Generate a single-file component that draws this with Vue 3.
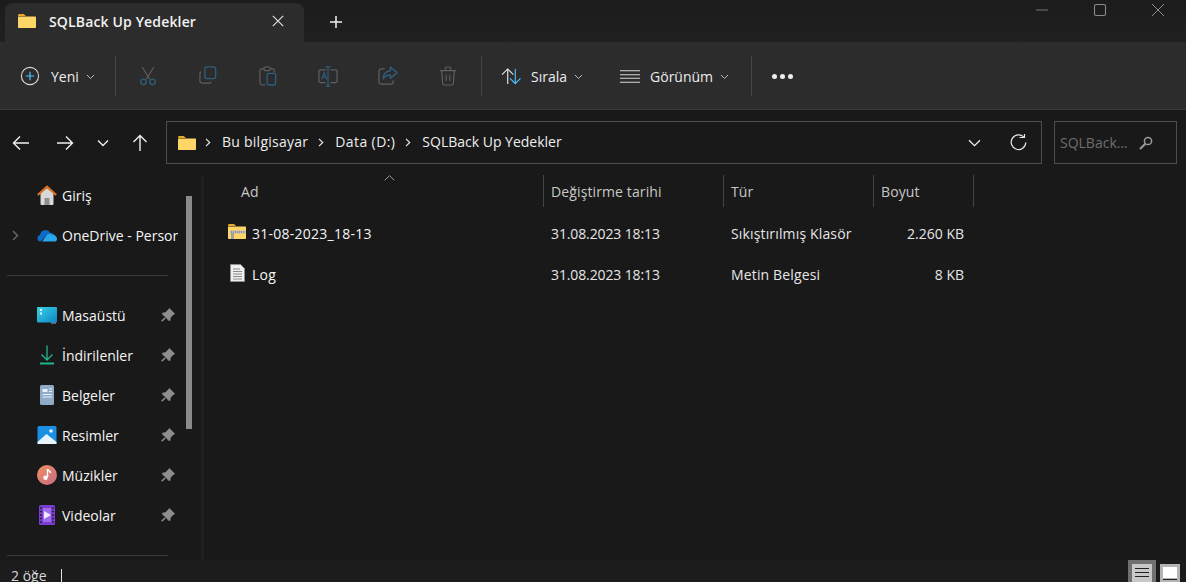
<script setup>
const navItems = [
  { key: 'desk', label: 'Masaüstü' },
  { key: 'down', label: 'İndirilenler' },
  { key: 'docs', label: 'Belgeler' },
  { key: 'pics', label: 'Resimler' },
  { key: 'music', label: 'Müzikler' },
  { key: 'video', label: 'Videolar' },
]
const columns = ['Ad', 'Değiştirme tarihi', 'Tür', 'Boyut']
const files = [
  { icon: 'zip', name: '31-08-2023_18-13', date: '31.08.2023 18:13', type: 'Sıkıştırılmış Klasör', size: '2.260 KB' },
  { icon: 'txt', name: 'Log', date: '31.08.2023 18:13', type: 'Metin Belgesi', size: '8 KB' },
]
const crumbs = ['Bu bilgisayar', 'Data (D:)', 'SQLBack Up Yedekler']
</script>

<template>
  <div class="win">
    <header class="titlebar">
      <div class="tab">
        <svg class="folder" width="20" height="16" viewBox="0 0 20 16"><path d="M1 2.500C1 1.700 1.600 1 2.400 1h4.400l2 2H1z" fill="#e8a92c"/><path d="M1 3.500h17c.6 0 1 .4 1 1V14c0 .6-.4 1-1 1H2c-.6 0-1-.4-1-1z" fill="#fdd667"/></svg>
        <span class="tab-title">SQLBack Up Yedekler</span>
        <svg class="tab-close" width="12" height="12" viewBox="0 0 12 12"><path d="M.8.8l10.400 10.400M11.200.8L.8 11.200" stroke="#e4e4e4" stroke-width="1.100"/></svg>
      </div>
      <svg class="plus" width="14" height="14" viewBox="0 0 14 14"><path d="M7 1v12M1 7h12" stroke="#f2f2f2" stroke-width="1.500"/></svg>
      <div class="caption">
        <svg width="14" height="14" viewBox="0 0 14 14"><path d="M1 7h12" stroke="#777" stroke-width="1"/></svg>
        <svg width="14" height="14" viewBox="0 0 14 14"><rect x="1.500" y="1.500" width="11" height="11" rx="1.500" fill="none" stroke="#8a8a8a" stroke-width="1.100"/></svg>
        <svg width="14" height="14" viewBox="0 0 14 14"><path d="M1 1l12 12M13 1L1 13" stroke="#8a8a8a" stroke-width="1"/></svg>
      </div>
    </header>

    <section class="toolbar">
      <div class="tool-new">
        <svg width="20" height="20" viewBox="0 0 20 20"><circle cx="10" cy="10" r="8.600" fill="none" stroke="#d6d6d6" stroke-width="1.100"/><path d="M10 5.800v8.400M5.800 10h8.400" stroke="#4cc2ff" stroke-width="1.200"/></svg>
        <span class="tool-label">Yeni</span>
        <svg class="chev" width="9" height="6" viewBox="0 0 9 6"><path d="M1 1l3.500 3.500L8 1" fill="none" stroke="#bbb"/></svg>
      </div>
      <div class="vsep"></div>
      <div class="icon-group">
        <div class="icon-btn">
          <svg width="18" height="20" viewBox="0 0 20 22"><path d="M3.500 1l8.300 13.500M16.500 1L8.200 14.500" fill="none" stroke="#5f5f5f" stroke-width="1.200"/><circle cx="5" cy="17.500" r="3" fill="none" stroke="#2f5d7c" stroke-width="1.500"/><circle cx="15" cy="17.500" r="3" fill="none" stroke="#2f5d7c" stroke-width="1.500"/></svg>
        </div>
        <div class="icon-btn">
          <svg width="18" height="18" viewBox="0 0 20 20"><path d="M2.500 6.500A2 2 0 0 0 1 8.500v8A2.500 2.500 0 0 0 3.500 19h8a2 2 0 0 0 2-1.500" fill="none" stroke="#5f5f5f" stroke-width="1.300"/><rect x="6.500" y="1" width="12" height="13" rx="2.500" fill="none" stroke="#2f5d7c" stroke-width="1.500"/></svg>
        </div>
        <div class="icon-btn">
          <svg width="18" height="20" viewBox="0 0 20 22"><path d="M5 3H3a2 2 0 0 0-2 2v13.500A2.500 2.500 0 0 0 3.500 21H7M13 3h2a2 2 0 0 1 2 2v2" fill="none" stroke="#5f5f5f" stroke-width="1.300"/><rect x="5.500" y="1" width="7" height="4" rx="1.500" fill="none" stroke="#5f5f5f" stroke-width="1.300"/><rect x="9" y="8" width="9.500" height="13" rx="2" fill="none" stroke="#2f5d7c" stroke-width="1.500"/></svg>
        </div>
        <div class="icon-btn">
          <svg width="20" height="21" viewBox="0 0 21 22"><path d="M8 4H3a2 2 0 0 0-2 2v9.500a2 2 0 0 0 2 2h5M13 4h5a2 2 0 0 1 2 2v9.500a2 2 0 0 1-2 2h-5" fill="none" stroke="#5f5f5f" stroke-width="1.300"/><path d="M8 1h5M8 21h5M10.500 1v20" fill="none" stroke="#2f5d7c" stroke-width="1.300"/><path d="M4 14l2.500-7L9 14M4.800 11.800h3.400" fill="none" stroke="#2f5d7c" stroke-width="1.200"/></svg>
        </div>
        <div class="icon-btn">
          <svg width="20" height="19" viewBox="0 0 21 20"><path d="M7 3H3.500A2.500 2.500 0 0 0 1 5.500v11A2.500 2.500 0 0 0 3.500 19h10a2.500 2.500 0 0 0 2.500-2.500V15" fill="none" stroke="#5f5f5f" stroke-width="1.300"/><path d="M13 1l7 6-7 6V9.500c-4 0-6 1.500-7.500 4 0-5 3-8 7.500-8.500z" fill="none" stroke="#2f5d7c" stroke-width="1.500" stroke-linejoin="round"/></svg>
        </div>
        <div class="icon-btn">
          <svg width="18" height="20" viewBox="0 0 20 22"><path d="M1 5h18M7 5V3a2 2 0 0 1 2-2h2a2 2 0 0 1 2 2v2M3 5l1 14a2 2 0 0 0 2 2h8a2 2 0 0 0 2-2l1-14M8 9.500v7M12 9.500v7" fill="none" stroke="#5f5f5f" stroke-width="1.300"/></svg>
        </div>
      </div>
      <div class="vsep"></div>
      <div class="tool-sort">
        <svg width="21" height="17" viewBox="0 0 22 18"><path d="M7 17V1.500M1 7l6-6 6 6" fill="none" stroke="#e6e6e6" stroke-width="1.200"/><path d="M15 1v15.500M9.500 11l5.500 5.500 5.500-5.500" fill="none" stroke="#4cc2ff" stroke-width="1.200"/></svg>
        <span class="tool-label">Sırala</span>
        <svg class="chev" width="9" height="6" viewBox="0 0 9 6"><path d="M1 1l3.500 3.500L8 1" fill="none" stroke="#bbb"/></svg>
      </div>
      <div class="tool-view">
        <svg width="20" height="13" viewBox="0 0 20 13"><path d="M0 .8h20M0 4.800h20M0 8.300h20M0 12.200h20" stroke="#d8d8d8" stroke-width="1.100"/></svg>
        <span class="tool-label">Görünüm</span>
        <svg class="chev" width="9" height="6" viewBox="0 0 9 6"><path d="M1 1l3.500 3.500L8 1" fill="none" stroke="#bbb"/></svg>
      </div>
      <div class="vsep"></div>
      <div class="dots"><i></i><i></i><i></i></div>
    </section>

    <section class="navrow">
      <div class="arrows">
        <svg width="18" height="16" viewBox="0 0 18 16"><path d="M17 8H1.500M8 1.500L1.500 8 8 14.500" fill="none" stroke="#f0f0f0" stroke-width="1.400"/></svg>
        <svg width="18" height="16" viewBox="0 0 18 16"><path d="M1 8h15.500M10 1.500L16.500 8 10 14.500" fill="none" stroke="#f0f0f0" stroke-width="1.400"/></svg>
        <svg width="12" height="8" viewBox="0 0 12 8"><path d="M1 1.500l5 5 5-5" fill="none" stroke="#f0f0f0" stroke-width="1.400"/></svg>
        <svg width="16" height="18" viewBox="0 0 16 18"><path d="M8 17V1.500M1.500 8L8 1.500 14.500 8" fill="none" stroke="#f0f0f0" stroke-width="1.400"/></svg>
      </div>
      <div class="address">
        <svg class="folder" width="20" height="16" viewBox="0 0 20 16"><path d="M1 2.500C1 1.700 1.600 1 2.400 1h4.400l2 2H1z" fill="#e8a92c"/><path d="M1 3.500h17c.6 0 1 .4 1 1V14c0 .6-.4 1-1 1H2c-.6 0-1-.4-1-1z" fill="#fdd667"/></svg>
        <template v-for="c in crumbs" :key="c">
          <svg class="crumb-chev" width="6" height="9" viewBox="0 0 6 9"><path d="M1 .8l3.700 3.700L1 8.200" fill="none" stroke="#e8e8e8" stroke-width="1.200"/></svg>
          <span class="crumb">{{ c }}</span>
        </template>
        <svg class="addr-down" width="13" height="8" viewBox="0 0 13 8"><path d="M1 1.200l5.500 5.500L12 1.200" fill="none" stroke="#eee" stroke-width="1.300"/></svg>
        <svg class="refresh" width="17" height="17" viewBox="0 0 17 17"><path d="M13.800 3.200A7.300 7.300 0 1 0 15.800 8.500" fill="none" stroke="#e8e8e8" stroke-width="1.200"/><path d="M9.500 3.500h5V-.5" fill="none" stroke="#e8e8e8" stroke-width="1.200"/></svg>
      </div>
      <div class="search">
        <span>SQLBack...</span>
        <svg width="14" height="14" viewBox="0 0 14 14"><circle cx="9" cy="5" r="3.600" fill="none" stroke="#9a9a9a" stroke-width="1.500"/><path d="M6.300 7.700L1 13" stroke="#9a9a9a" stroke-width="2"/></svg>
      </div>
    </section>

    <main class="body">
      <aside class="side">
        <div class="side-list">
          <div class="side-row">
            <svg width="20" height="20" viewBox="0 0 20 20"><path d="M3.500 8.500L10 3l6.500 5.500V19a1 1 0 0 1-1 1h-11a1 1 0 0 1-1-1z" fill="#d8d8d8"/><path d="M7.500 13h5v7h-5z" fill="#8e8e8e"/><path d="M.8 10L10 1.500 19.200 10" fill="none" stroke="#e8711c" stroke-width="2"/></svg>
            <span>Giriş</span>
          </div>
          <div class="side-row">
            <svg class="expand" width="7" height="11" viewBox="0 0 7 11"><path d="M1 1l4.500 4.500L1 10" fill="none" stroke="#666" stroke-width="1.500"/></svg>
            <svg width="20" height="14" viewBox="0 0 20 14"><path d="M3.500 13.500A3.300 3.300 0 0 1 3 7a5.500 5.500 0 0 1 10.300-2A4.500 4.500 0 0 1 18 8H9z" fill="#0f6cc4"/><path d="M5 13.500l4.500-6a4 4 0 0 1 6-.5c3 0 4.500 2 4.500 4 0 1.300-.8 2.500-2 2.500z" fill="#28a8ea"/></svg>
            <span class="clip">OneDrive - Personal</span>
          </div>
          <div class="side-sep"></div>
          <div v-for="n in navItems" :key="n.key" class="side-row">
            <svg v-if="n.key === 'desk'" width="20" height="17" viewBox="0 0 20 17"><defs><linearGradient id="dk" x1="0" y1="0" x2="1" y2="1"><stop offset="0" stop-color="#3ad2e6"/><stop offset="1" stop-color="#0c86c4"/></linearGradient></defs><rect width="20" height="15.500" rx="1" fill="url(#dk)"/><path d="M3 2h2v2H3zM3 5.500h2v2H3z" fill="#e8f8ff"/><path d="M14 15.500h5v1h-5z" fill="#9ad"/></svg>
            <svg v-else-if="n.key === 'down'" width="16" height="20" viewBox="0 0 16 20"><path d="M8 .5v14M2.500 9.500L8 15l5.500-5.500" fill="none" stroke="#1fb58f" stroke-width="1.300"/><path d="M1 18.500h14" stroke="#1fb58f" stroke-width="2"/></svg>
            <svg v-else-if="n.key === 'docs'" width="14" height="20" viewBox="0 0 14 20"><rect width="14" height="20" rx="1.500" fill="#8fabc8"/><path d="M2.500 4h5v3h-5z" fill="#e9f0f7"/><path d="M9 4h3M9 6.500h3M2.500 9.500h9.500M2.500 12h9.500" stroke="#e9f0f7"/></svg>
            <svg v-else-if="n.key === 'pics'" width="19" height="18" viewBox="0 0 19 18"><rect width="19" height="18" rx="1.500" fill="#1a8fe3"/><path d="M0 18v-2l9-8 10 8v2z" fill="#e8f4fc"/><circle cx="13.500" cy="5" r="1.800" fill="#e8f4fc"/></svg>
            <svg v-else-if="n.key === 'music'" width="20" height="20" viewBox="0 0 20 20"><defs><linearGradient id="mu" x1="0" y1="0" x2="1" y2="1"><stop offset="0" stop-color="#f39060"/><stop offset="1" stop-color="#c46a86"/></linearGradient></defs><circle cx="10" cy="10" r="10" fill="url(#mu)"/><path d="M10.500 4v8" stroke="#fff" stroke-width="1.500"/><path d="M10.500 4c.5 2 3 2 3 4" fill="none" stroke="#fff" stroke-width="1.500"/><circle cx="8.500" cy="12.800" r="2.200" fill="#fff"/></svg>
            <svg v-else width="16" height="20" viewBox="0 0 16 20"><rect width="16" height="20" rx="1.500" fill="#7a3fd0"/><path d="M4 3h8v14H4z" fill="#9d6ce8"/><path d="M5 6l7 4-7 4z" fill="#f1e9ff"/><path d="M1.200 3h1.600M1.200 6.500h1.600M1.200 10h1.600M1.200 13.500h1.600M1.200 17h1.600M13.200 3h1.600M13.200 6.500h1.600M13.200 10h1.600M13.200 13.500h1.600M13.200 17h1.600" stroke="#1c1030" stroke-width="1.500"/></svg>
            <span>{{ n.label }}</span>
            <svg class="pin" width="14" height="14" viewBox="0 0 14 14"><path d="M8.200 0L14 5.800 12.500 6.800 9.800 9.500 9.300 12.500 8 13 1 6 1.500 4.700 4.500 4.200 7.200 1.500z" fill="#8d8d8d"/><path d="M4 10L.7 13.300" stroke="#8d8d8d" stroke-width="1.600"/></svg>
          </div>
          <div class="side-sep"></div>
        </div>
        <div class="scroll-track"><div class="scroll-thumb"></div></div>
      </aside>

      <section class="content">
        <div class="col-head">
          <div v-for="c in columns" :key="c" class="cell head-cell">{{ c }}</div>
          <svg class="sort-caret" width="11" height="6" viewBox="0 0 11 6"><path d="M.7 5.300L5.500.7l4.800 4.600" fill="none" stroke="#999"/></svg>
        </div>
        <div v-for="f in files" :key="f.name" class="row">
          <div class="cell name">
            <svg v-if="f.icon === 'zip'" class="file-icon" width="18" height="15" viewBox="0 0 18 15"><path d="M0 1.500C0 .7.600 0 1.400 0H6l2 2H0z" fill="#e8a92c"/><path d="M0 2.500h17c.6 0 1 .4 1 1V14c0 .6-.4 1-1 1H1c-.6 0-1-.4-1-1z" fill="#fdd667"/><path d="M2 6.500h16v3H2z" fill="#bdbdbd"/><path d="M3 8h14" stroke="#6b6b6b" stroke-dasharray="1 1"/><path d="M3 9h3v6H3z" fill="#a0a0a0"/></svg>
            <svg v-else class="file-icon txt" width="15" height="18" viewBox="0 0 15 18"><path d="M.5.500h10l4 4v13H.5z" fill="#efefef" stroke="#8d8d8d"/><path d="M3 5h7M3 7.500h9M3 10h9M3 12.500h9M3 15h9" stroke="#8a8a8a"/></svg>
            <span>{{ f.name }}</span>
          </div>
          <div class="cell date">{{ f.date }}</div>
          <div class="cell kind">{{ f.type }}</div>
          <div class="cell size">{{ f.size }}</div>
        </div>
      </section>
    </main>

    <footer class="status">
      <span class="count">2 öğe</span>
      <i class="caret"></i>
      <div class="views">
        <div class="view-btn on"><svg width="20" height="18" viewBox="0 0 20 18"><rect width="20" height="18" fill="#c8c8c8"/><path d="M3 4.500h14M3 8.500h14M3 12.500h14" stroke="#222" stroke-width="1.200"/></svg></div>
        <div class="view-btn plain"><svg width="20" height="18" viewBox="0 0 20 18"><rect width="20" height="18" fill="#b4b4b4"/><rect x="3" y="3" width="14" height="11" fill="#fff"/><path d="M3 15.500h14" stroke="#222"/></svg></div>
      </div>
    </footer>
  </div>
</template>

<style>
html, body { margin: 0; background: #191919; }
</style>

<style scoped>
.win {
  width: 1186px;
  height: 582px;
  overflow: hidden;
  display: flex;
  flex-direction: column;
  background: #191919;
  color: #f5f5f5;
  font-family: "Open Sans", "Noto Sans", sans-serif;
  font-size: 14px;
}
svg { display: block; flex: none; }

.titlebar {
  height: 42px;
  flex: none;
  display: flex;
  align-items: flex-end;
  padding-left: 5px;
  box-sizing: border-box;
  background: linear-gradient(#1c1c1c, #202020);
}
.tab {
  width: 299px;
  height: 39px;
  box-sizing: border-box;
  padding: 0 20px 3px 12px;
  display: flex;
  align-items: center;
  background: #2c2c2c;
  border-radius: 8px 8px 0 0;
}
.tab-title { margin-left: 12px; flex: 1; font-weight: 600; color: #f2f2f2; letter-spacing: 0.15px; }
.plus { align-self: center; margin: 2px 0 0 25px; }
.caption {
  margin-left: auto;
  align-self: flex-start;
  display: flex;
  gap: 44px;
  padding: 3px 21px 0 0;
}

.toolbar {
  height: 68px;
  flex: none;
  box-sizing: border-box;
  padding-top: 1px;
  display: flex;
  align-items: center;
  background: #2c2c2c;
  border-bottom: 1px solid #3a3a3a;
}
.vsep { width: 1px; height: 40px; background: #454545; flex: none; }
.tool-label { color: #ededed; }
.tool-new { width: 115px; box-sizing: border-box; padding-left: 20px; display: flex; align-items: center; }
.tool-new .tool-label { margin-left: 11px; }
.chev { margin-left: 7px; margin-top: 1px; }
.icon-group { display: flex; padding: 0 3px 0 2px; }
.icon-btn { width: 60px; flex: none; display: flex; justify-content: center; }
.tool-sort { margin-left: 19px; display: flex; align-items: center; }
.tool-sort .tool-label { margin-left: 9px; }
.tool-view { margin-left: 37px; margin-right: 22px; display: flex; align-items: center; }
.tool-view .tool-label { margin-left: 10px; }
.dots { margin-left: 20px; display: flex; gap: 3px; }
.dots i { width: 5px; height: 5px; border-radius: 50%; background: #eee; }

.navrow {
  height: 65px;
  flex: none;
  display: flex;
  align-items: center;
  box-sizing: border-box;
  padding: 0 9px 0 12px;
  background: #191919;
}
.arrows { width: 154px; flex: none; display: flex; align-items: center; }
.arrows svg:nth-child(2) { margin-left: 26px; }
.arrows svg:nth-child(3) { margin-left: 23px; }
.arrows svg:nth-child(4) { margin-left: 23px; }
.address {
  width: 876px;
  height: 43px;
  flex: none;
  box-sizing: border-box;
  border: 1px solid #4d4d4d;
  display: flex;
  align-items: center;
  padding-left: 10px;
}
.crumb-chev { margin: 0 11px 0 10px; }
.crumb { color: #eee; margin-top: -2px; }
.crumb:nth-of-type(1) { letter-spacing: 0.25px; }
.crumb:nth-of-type(2) { letter-spacing: 0.4px; }
.address .folder + .crumb-chev { margin-left: 8px; }
.addr-down { margin-left: auto; }
.refresh { margin: 0 14px 0 29px; }
.search {
  width: 123px;
  height: 43px;
  flex: none;
  margin-left: 12px;
  box-sizing: border-box;
  border: 1px solid #4d4d4d;
  display: flex;
  align-items: center;
  justify-content: space-between;
  padding: 0 23px 0 5px;
  color: #6e6e6e;
}

.body { flex: 1; min-height: 0; display: flex; }
.side { flex: none; display: flex; box-sizing: border-box; border-right: 3px solid #202020; width: 204px; }
.side-list { width: 186px; flex: none; overflow: hidden; }
.side-row {
  height: 40px;
  display: flex;
  align-items: center;
  box-sizing: border-box;
  padding-left: 37px;
  position: relative;
  color: #f5f5f5;
}
.side-row > svg:first-child:not(.expand) { width: 20px; }
.side-row span { margin-left: 5px; white-space: nowrap; }
.expand { position: absolute; left: 12px; top: 15px; }
.clip { width: 116px; overflow: hidden; }
.pin { margin-left: auto; margin-right: 11px; }
.side-sep { height: 1px; margin: 20px 18px 19px 7px; background: #3a3a3a; }
.scroll-track { width: 15px; flex: none; }
.scroll-thumb { width: 6px; height: 233px; margin-top: 21px; background: #8a8a8a; }

.content { flex: 1; min-width: 0; }
.col-head, .row {
  display: grid;
  grid-template-columns: 340px 180px 150px 100px;
}
.col-head { height: 32px; position: relative; margin-bottom: 6px; }
.cell { display: flex; align-items: center; padding-left: 7px; color: #e6e6e6; white-space: nowrap; }
.head-cell { border-right: 1px solid #444; padding-left: 7px; color: #c8c8c8; letter-spacing: 0.12px; }
.head-cell:first-child { padding-left: 37px; }
.sort-caret { position: absolute; left: 180px; top: 0; }
.row { height: 41px; }
.name { padding-left: 24px; color: #f5f5f5; }
.name span { margin-left: 6px; letter-spacing: 0.25px; }
.date { letter-spacing: -0.12px; }
.kind { letter-spacing: 0.15px; }
.file-icon { margin-top: -4px; }
.file-icon.txt { margin-left: 2px; margin-right: 1px; }
.size { justify-content: flex-end; padding-right: 10px; }

.status {
  height: 22px;
  flex: none;
  display: flex;
  align-items: center;
  box-sizing: border-box;
  padding-left: 11px;
  background: #1c1c1c;
  color: #d8d8d8;
}
.count { padding-top: 8px; }
.caret { width: 1px; height: 13px; margin: 8px 0 0 14px; background: #e0e0e0; }
.views { margin-left: auto; align-self: stretch; display: flex; gap: 4px; padding-right: 6px; }
.view-btn { height: 22px; overflow: hidden; box-sizing: border-box; padding-top: 4px; }
.view-btn.on { background: #707070; padding: 4px; }
</style>
